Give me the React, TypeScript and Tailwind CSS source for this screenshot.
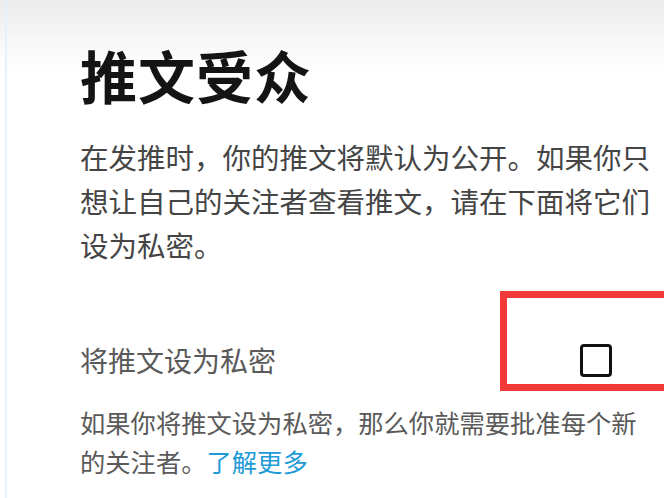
export default function App() {
  return (
    <div
      className="relative h-[498px] w-[664px] overflow-hidden bg-white"
      style={{ fontFamily: '"Noto Sans CJK SC", "Noto Sans", sans-serif' }}
    >
      {/* top shade */}
      <div className="pointer-events-none absolute inset-x-0 top-0 h-[70px] bg-gradient-to-b from-[#ececec] to-white" />

      <div className="relative flex h-full">
        {/* left rule */}
        <div className="ml-[5px] w-[2px] shrink-0 bg-[#e3f3f7]" />

        <div className="flex flex-col pl-[73px]">
          <h1 className="mt-[40px] text-[57px] font-bold leading-[68px] tracking-[1px] text-[#141414]">
            推文受众
          </h1>

          <p className="mt-[27px] w-[580px] text-[28.5px] leading-[44px] text-[#454545]">
            在发推时，你的推文将默认为公开。如果你只想让自己的关注者查看推文，请在下面将它们设为私密。
          </p>

          <div className="mt-[73px] flex items-center">
            <span className="w-[500px] text-[28px] leading-[40px] text-[#5a5a5a]">将推文设为私密</span>
            <div className="relative">
              <div className="h-[33px] w-[32px] rounded-[4px] border-[3px] border-[#111]" />
              {/* highlight annotation */}
              <div className="absolute left-[-80px] top-[-53px] h-[100px] w-[200px] border-[7px] border-[#f23a3a]" />
            </div>
          </div>

          <p className="mt-[23px] w-[565px] text-[25.3px] leading-[39px] text-[#5a5a5a]">
            如果你将推文设为私密，那么你就需要批准每个新的关注者。
            <a className="text-[#1d9bd7]">了解更多</a>
          </p>
        </div>
      </div>
    </div>
  )
}
